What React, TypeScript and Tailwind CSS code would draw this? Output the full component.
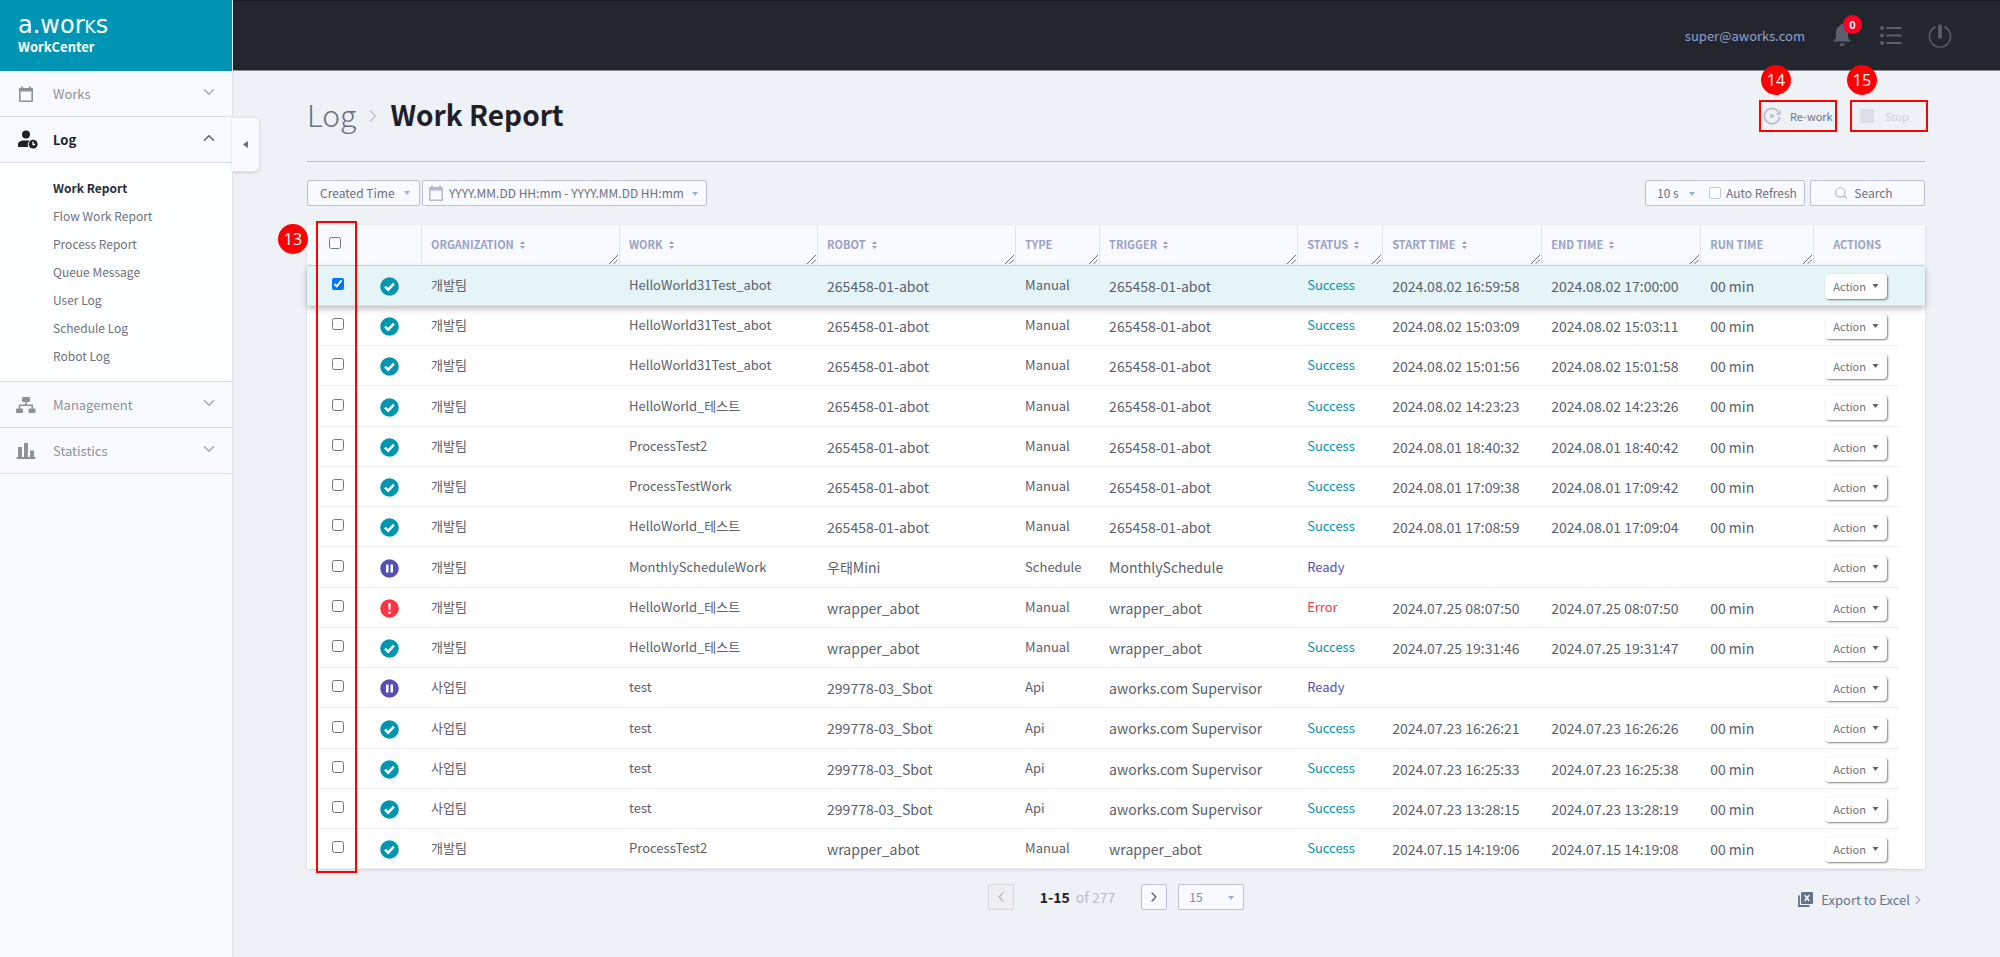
import { useState } from "react";
import type { ReactNode } from "react";
import { ChevronDown, ChevronLeft, ChevronRight, ChevronUp, Search } from "lucide-react";

type Result = "Success" | "Ready" | "Error";

type LogRow = {
  org: string;
  work: string;
  robot: string;
  type: string;
  trigger: string;
  status: Result;
  start: string;
  end: string;
};

const row = (
  org: string,
  work: string,
  robot: string,
  type: string,
  trigger: string,
  status: Result,
  start = "",
  end = ""
): LogRow => ({ org, work, robot, type, trigger, status, start, end });

const ROWS: LogRow[] = [
  row("개발팀", "HelloWorld31Test_abot", "265458-01-abot", "Manual", "265458-01-abot", "Success", "2024.08.02 16:59:58", "2024.08.02 17:00:00"),
  row("개발팀", "HelloWorld31Test_abot", "265458-01-abot", "Manual", "265458-01-abot", "Success", "2024.08.02 15:03:09", "2024.08.02 15:03:11"),
  row("개발팀", "HelloWorld31Test_abot", "265458-01-abot", "Manual", "265458-01-abot", "Success", "2024.08.02 15:01:56", "2024.08.02 15:01:58"),
  row("개발팀", "HelloWorld_테스트", "265458-01-abot", "Manual", "265458-01-abot", "Success", "2024.08.02 14:23:23", "2024.08.02 14:23:26"),
  row("개발팀", "ProcessTest2", "265458-01-abot", "Manual", "265458-01-abot", "Success", "2024.08.01 18:40:32", "2024.08.01 18:40:42"),
  row("개발팀", "ProcessTestWork", "265458-01-abot", "Manual", "265458-01-abot", "Success", "2024.08.01 17:09:38", "2024.08.01 17:09:42"),
  row("개발팀", "HelloWorld_테스트", "265458-01-abot", "Manual", "265458-01-abot", "Success", "2024.08.01 17:08:59", "2024.08.01 17:09:04"),
  row("개발팀", "MonthlyScheduleWork", "우태Mini", "Schedule", "MonthlySchedule", "Ready"),
  row("개발팀", "HelloWorld_테스트", "wrapper_abot", "Manual", "wrapper_abot", "Error", "2024.07.25 08:07:50", "2024.07.25 08:07:50"),
  row("개발팀", "HelloWorld_테스트", "wrapper_abot", "Manual", "wrapper_abot", "Success", "2024.07.25 19:31:46", "2024.07.25 19:31:47"),
  row("사업팀", "test", "299778-03_Sbot", "Api", "aworks.com Supervisor", "Ready"),
  row("사업팀", "test", "299778-03_Sbot", "Api", "aworks.com Supervisor", "Success", "2024.07.23 16:26:21", "2024.07.23 16:26:26"),
  row("사업팀", "test", "299778-03_Sbot", "Api", "aworks.com Supervisor", "Success", "2024.07.23 16:25:33", "2024.07.23 16:25:38"),
  row("사업팀", "test", "299778-03_Sbot", "Api", "aworks.com Supervisor", "Success", "2024.07.23 13:28:15", "2024.07.23 13:28:19"),
  row("개발팀", "ProcessTest2", "wrapper_abot", "Manual", "wrapper_abot", "Success", "2024.07.15 14:19:06", "2024.07.15 14:19:08"),
];

const COLUMNS = [
  { label: "ORGANIZATION", sort: true },
  { label: "WORK", sort: true },
  { label: "ROBOT", sort: true },
  { label: "TYPE", sort: false },
  { label: "TRIGGER", sort: true },
  { label: "STATUS", sort: true },
  { label: "START TIME", sort: true },
  { label: "END TIME", sort: true },
  { label: "RUN TIME", sort: false },
];

const LOG_MENU = ["Work Report", "Flow Work Report", "Process Report", "Queue Message", "User Log", "Schedule Log", "Robot Log"];

const STATUS_COLOR: Record<Result, string> = {
  Success: "text-[#0095b0]",
  Ready: "text-[#5450b5]",
  Error: "text-[#ff3344]",
};

/* ---------- Icons ---------- */

const CalendarIcon = ({ className }: { className: string }) => (
  <svg viewBox="0 0 16 16" className={className} aria-hidden="true">
    <path d="M2 2h12a1 1 0 0 1 1 1v12a1 1 0 0 1-1 1H2a1 1 0 0 1-1-1V3a1 1 0 0 1 1-1z M2.6 5.6v8.8h10.8V5.6z" fill="currentColor" fillRule="evenodd" />
    <path d="M3.2 .4h1.8V3H3.2z M11 .4h1.8V3H11z" fill="currentColor" />
  </svg>
);

const UserClockIcon = () => (
  <svg viewBox="0 0 20 19" className="h-[19px] w-5" aria-hidden="true">
    <circle cx="8" cy="4.4" r="4" fill="currentColor" />
    <path d="M0 17v-2.6C0 11.6 3 10.4 5.5 10.4h6.2A6 6 0 0 0 10.2 17z" fill="currentColor" />
    <circle cx="15.2" cy="14.2" r="4.4" fill="currentColor" />
    <path d="M15 11.6v2.900h2.2" fill="none" stroke="#f8faff" strokeWidth="1.3" />
  </svg>
);

const SitemapIcon = () => (
  <svg viewBox="0 0 20 16" className="h-4 w-5" aria-hidden="true">
    <g fill="currentColor">
      <rect x="6" y="0" width="8" height="5" rx="1" />
      <rect x="0" y="11.5" width="7" height="4.5" rx="1" />
      <rect x="12.5" y="11.5" width="7" height="4.5" rx="1" />
    </g>
    <path d="M10 4v4M3.5 12V8.2h12.7V12" fill="none" stroke="currentColor" strokeWidth="1.6" />
  </svg>
);

const BarsIcon = () => (
  <svg viewBox="0 0 20 16" className="h-4 w-5" aria-hidden="true">
    <path d="M2 4h4v10H2z M8 0h4v14H8z M14 7.5h4V14h-4z M.5 14h19v2H.5z" fill="currentColor" />
  </svg>
);

const BellIcon = () => (
  <svg viewBox="0 0 18 23" className="h-[23px] w-[18px]" aria-hidden="true">
    <path d="M9 0c1 0 1.5.7 1.5 1.7C13.6 2.5 15 5 15 8v6l3 3.500H0L3 14V8c0-3 1.400-5.500 4.500-6.300C7.500.7 8 0 9 0z M6.600 19.500h4.800a2.400 2.700 0 0 1-4.800 0z" fill="currentColor" />
  </svg>
);

const ListIcon = () => (
  <svg viewBox="0 0 22 19" className="h-[19px] w-[22px]" aria-hidden="true">
    <g fill="currentColor">
      <circle cx="2" cy="2" r="1.9" />
      <circle cx="2" cy="9.5" r="1.9" />
      <circle cx="2" cy="17" r="1.9" />
    </g>
    <path d="M7 2h14M7 9.500h14M7 17h14" stroke="currentColor" strokeWidth="1.8" strokeLinecap="round" />
  </svg>
);

const PowerIcon = () => (
  <svg viewBox="0 0 24 24" className="size-6" aria-hidden="true">
    <path d="M7.300 3A10.600 10.600 0 1 0 16.700 3" fill="none" stroke="currentColor" strokeWidth="1.4" strokeLinecap="round" />
    <path d="M12 2v11" stroke="currentColor" strokeWidth="3.6" strokeLinecap="round" />
  </svg>
);

const ReworkIcon = () => (
  <svg viewBox="0 0 18 18" className="size-[18px]" aria-hidden="true">
    <path d="M15 4.200A7.700 7.700 0 1 0 16.700 9.600" fill="none" stroke="currentColor" strokeWidth="1.7" />
    <path d="M17.600 2.600v5.200h-5.200z" fill="currentColor" />
    <path d="M7.400 6.200 11.600 9l-4.200 2.800z" fill="currentColor" />
  </svg>
);

const ExcelIcon = () => (
  <svg viewBox="0 0 15 15" className="size-[15px]" aria-hidden="true">
    <path d="M1 3.500V14h10.500" fill="none" stroke="currentColor" strokeWidth="1.8" />
    <rect x="3" y="0" width="12" height="12" rx="1" fill="currentColor" />
    <path d="m6.800 3.200 4.400 5.600M11.200 3.200 6.800 8.800" stroke="#fff" strokeWidth="1.5" />
  </svg>
);

const Caret = ({ className }: { className: string }) => (
  <svg viewBox="0 0 6 4" className={className} aria-hidden="true">
    <path d="M0 0h6L3 4z" fill="currentColor" />
  </svg>
);

const SortIcon = () => (
  <svg viewBox="0 0 5 8" className="h-2 w-[5px]" aria-hidden="true">
    <path d="M0 3h5L2.500 0z M0 5h5L2.500 8z" fill="currentColor" />
  </svg>
);

const StatusIcon = ({ status }: { status: Result }) => (
  <svg viewBox="0 0 19 19" className={`mx-auto size-[19px] ${STATUS_COLOR[status]}`} aria-label={status}>
    <circle cx="9.5" cy="9.5" r="9.3" fill="currentColor" />
    {status === "Success" && <path d="m5 9.600 3.200 3.100 5.700-6" fill="none" stroke="#fff" strokeWidth="2.5" />}
    {status === "Ready" && <path d="M6 5.500h2.500v8H6z M10.500 5.500H13v8h-2.500z" fill="#fff" />}
    {status === "Error" && <path d="M8.200 4h2.600l-.4 7H8.600z M8.300 12.500h2.400v2.400H8.300z" fill="#fff" />}
  </svg>
);

/* ---------- Pieces ---------- */

const Callout = ({ n, className }: { n: number; className: string }) => (
  <span className={`absolute flex size-[30px] items-center justify-center rounded-full bg-[#ff0000] font-['Open_Sans',sans-serif] text-base text-white ${className}`}>
    {n}
  </span>
);

const MenuItem = ({ icon, label, open = false }: { icon: ReactNode; label: string; open?: boolean }) => (
  <button
    type="button"
    aria-expanded={open}
    className={`flex h-[46px] w-full items-center border-b border-[#dcdfe9] pr-[14px] pl-4 text-left text-[13px] ${open ? "font-bold text-[#1d2029]" : "text-[#8f9197]"}`}
  >
    <span className="flex w-[37px] justify-start">{icon}</span>
    <span className="flex-1">{label}</span>
    {open ? <ChevronUp className="mb-1 size-[18px] text-[#5c6070]" /> : <ChevronDown className="mb-1 size-[18px] text-[#a4a7b8]" />}
  </button>
);

const Sidebar = () => (
  <aside className="relative w-[233px] shrink-0 border-r border-[#dfe2ec] bg-[#f8faff]">
    <div className="flex h-[71px] flex-col bg-[#0095b5] px-[18px] pt-[13px] text-white">
      <span className="font-['DejaVu_Sans',sans-serif] text-2xl leading-6">
        a.wor<span className="[font-variant:small-caps]">k</span>s
      </span>
      <span className="text-[13px] leading-5 font-bold">WorkCenter</span>
    </div>
    <nav>
      <MenuItem label="Works" icon={<CalendarIcon className="ml-[2px] size-4" />} />
      <MenuItem label="Log" open icon={<span className="ml-[2px]"><UserClockIcon /></span>} />
      <ul className="border-b border-[#dcdfe9] bg-[#fdfeff] py-[11px] pl-[53px] text-xs">
        {LOG_MENU.map((item, i) => (
          <li key={item}>
            <a href="#" className={`flex h-7 items-center ${i === 0 ? "font-bold text-[#2a2d37]" : "text-[#6d7180]"}`}>
              {item}
            </a>
          </li>
        ))}
      </ul>
      <MenuItem label="Management" icon={<SitemapIcon />} />
      <MenuItem label="Statistics" icon={<BarsIcon />} />
    </nav>
    <button
      type="button"
      aria-label="Collapse menu"
      className="absolute top-[117px] left-[232px] flex h-[55px] w-7 items-center justify-center rounded-r-md border border-l-0 border-[#dfe2ec] bg-[#f8faff] shadow-sm"
    >
      <Caret className="h-[5px] w-[7px] rotate-90 text-[#5c6070]" />
    </button>
  </aside>
);

const TopBar = () => (
  <header className="flex h-[71px] items-center justify-end border-t border-b border-t-[#171a22] border-b-[#8c8e96] bg-[#23262f] pr-12 text-[#5c5f6d]">
    <span className="mr-7 text-[13px] text-[#8fa3cf]">super@aworks.com</span>
    <button type="button" aria-label="Notifications" className="relative mr-[29px]">
      <BellIcon />
      <span className="absolute -top-[9px] left-[10px] flex size-[19px] items-center justify-center rounded-full bg-[#ff0022] text-[11px] font-bold text-white">0</span>
    </button>
    <button type="button" aria-label="List" className="mr-[26px]">
      <ListIcon />
    </button>
    <button type="button" aria-label="Log out">
      <PowerIcon />
    </button>
  </header>
);

const Heading = () => (
  <div className="flex h-[91px] items-center justify-between border-b border-[#b9bfd0]">
    <h1 className="mb-1 flex items-center text-[28px]">
      <span className="text-3xl font-light text-[#6b7080]">Log</span>
      <ChevronRight className="mx-[7px] mt-1 size-5 text-[#c3c7d4]" strokeWidth={2} />
      <span className="font-bold text-[#1d2029]">Work Report</span>
    </h1>
    <div className="-mr-[3px] flex gap-[13px] text-[11px]">
      <button type="button" className="relative flex h-8 w-[78px] items-center gap-[9px] border-2 border-[#ff0000] pl-[2px] text-[#6d7180]">
        <span className="text-[#b9bcd0]"><ReworkIcon /></span>
        Re-work
        <Callout n={14} className="-top-[37px] left-0" />
      </button>
      <button type="button" className="relative flex h-8 w-[78px] items-center gap-[11px] border-2 border-[#ff0000] pl-2 text-[#cfd3de]">
        <span className="size-[14px] bg-[#dcdfea]" />
        Stop
        <Callout n={15} className="-top-[37px] -left-[5px]" />
      </button>
    </div>
  </div>
);

const Filters = () => {
  const [auto, setAuto] = useState(false);
  return (
    <div className="mt-[18px] flex items-center justify-between text-xs text-[#6d7180]">
      <div className="flex gap-[2px]">
        <div className="relative">
          <select aria-label="Time field" className="h-[26px] w-[113px] appearance-none rounded-xs border border-[#b9c0d8] bg-[#f8faff] pl-3">
            <option>Created Time</option>
          </select>
          <Caret className="pointer-events-none absolute top-[11px] right-[10px] h-1 w-[6px] text-[#9fb0d6]" />
        </div>
        <label className="relative flex h-[26px] w-[285px] items-center rounded-xs border border-[#b9c0d8] bg-[#f8faff] pl-[5px]">
          <CalendarIcon className="size-4 text-[#b4b9d0]" />
          <input aria-label="Period" readOnly value="YYYY.MM.DD HH:mm - YYYY.MM.DD HH:mm" className="ml-[5px] w-[242px] bg-transparent outline-none" />
          <Caret className="absolute top-[11px] right-2 h-1 w-[6px] text-[#9fb0d6]" />
        </label>
      </div>
      <div className="flex gap-[5px]">
        <div className="flex h-[26px] w-[160px] items-center rounded-xs border border-[#b9c0d8] bg-[#f8faff]">
          <div className="relative">
            <select aria-label="Refresh interval" className="w-[63px] appearance-none bg-transparent pl-[11px]">
              <option>10 s</option>
            </select>
            <Caret className="pointer-events-none absolute top-[7px] right-[14px] h-1 w-[6px] text-[#9fb0d6]" />
          </div>
          <label className="flex items-center gap-[5px]">
            <input
              type="checkbox"
              checked={auto}
              onChange={() => setAuto(!auto)}
              className="size-3 appearance-none rounded-xs border border-[#c3c7d4] bg-white checked:bg-[#0095b5]"
            />
            Auto Refresh
          </label>
        </div>
        <button type="button" className="flex h-[26px] w-[115px] items-center justify-center gap-[6px] rounded-xs border border-[#b9c0d8] bg-[#f8faff] pr-2">
          <Search className="size-[14px] text-[#b4b9c8]" />
          Search
        </button>
      </div>
    </div>
  );
};

const LogTable = () => {
  const [selected, setSelected] = useState<number[]>([0]);
  const toggle = (i: number) => setSelected(selected.includes(i) ? selected.filter((s) => s !== i) : [...selected, i]);

  return (
    <div className="relative mt-[19px] shadow-sm">
      <table className="w-full table-fixed border-separate border-spacing-0 bg-white text-sm text-[#5a5f6b]">
        {/* narrow first and last columns keep the row lines off the table edge */}
        <colgroup>
          <col className="w-[13px]" />
          <col className="w-[38px]" />
          <col className="w-[63px]" />
          <col className="w-[12.24%]" />
          <col className="w-[12.24%]" />
          <col className="w-[12.24%]" />
          <col className="w-[84px]" />
          <col className="w-[12.24%]" />
          <col className="w-[85px]" />
          <col className="w-[159px]" />
          <col className="w-[159px]" />
          <col className="w-[113px]" />
          <col />
          <col className="w-[26px]" />
        </colgroup>
        <thead>
          <tr className="h-[41px] bg-[#f8faff] text-left text-[11px] text-[#98a2c8]">
            <th colSpan={3} className="border-b border-[#cfd4de] pl-[22px] align-middle">
              <input
                type="checkbox"
                aria-label="Select all"
                checked={selected.length === ROWS.length}
                onChange={() => setSelected(selected.length === ROWS.length ? [] : ROWS.map((_, i) => i))}
                className="mb-1 block size-3"
              />
            </th>
            {COLUMNS.map((c) => (
              <th key={c.label} className="relative border-b border-l border-b-[#cfd4de] border-l-[#e2e5ee] pl-[9px] font-bold whitespace-nowrap">
                <span className="flex items-center gap-[6px]">
                  {c.label}
                  {c.sort && <SortIcon />}
                </span>
                <svg viewBox="0 0 9 9" className="absolute right-px bottom-px size-[9px]" aria-hidden="true">
                  <path d="M0 9 9 0M4.500 9 9 4.500" stroke="#6b6e75" strokeWidth="1" />
                </svg>
              </th>
            ))}
            <th colSpan={2} className="border-b border-l border-b-[#cfd4de] border-l-[#e2e5ee] pl-[19px] font-bold">
              ACTIONS
            </th>
          </tr>
        </thead>
        <tbody>
          {ROWS.map((r, i) => {
            const on = selected.includes(i);
            const line = on ? "border-b border-[#d3e0e4]" : "border-b border-[#eceef4]";
            const cell = `${line} pl-[10px] whitespace-nowrap`;
            return (
              <tr key={i} className={`h-10 nth-[4n]:h-[41px] ${on ? "relative bg-[#e4f4f7] shadow-[0_3px_6px_rgba(0,0,0,0.25)]" : ""}`}>
                <td className={on ? line : ""} />
                <td className={`${line} pl-3`}>
                  <input
                    type="checkbox"
                    aria-label={`Select row ${i + 1}`}
                    checked={on}
                    onChange={() => toggle(i)}
                    className="mb-[3px] block size-3 accent-[#0075ff]"
                  />
                </td>
                <td className={`${line} pt-[2px]`}>
                  <StatusIcon status={r.status} />
                </td>
                <td className={`${cell} text-[13px]`}>{r.org}</td>
                <td className={`${cell} text-[13px]`}>{r.work}</td>
                <td className={cell}>{r.robot}</td>
                <td className={`${cell} text-[13px]`}>{r.type}</td>
                <td className={cell}>{r.trigger}</td>
                <td className={`${cell} text-[13px] ${STATUS_COLOR[r.status]}`}>{r.status}</td>
                <td className={cell}>{r.start}</td>
                <td className={cell}>{r.end}</td>
                <td className={cell}>{r.start && "00 min"}</td>
                <td className={`${line} pl-3`}>
                  <button type="button" className="mt-[2px] flex h-[25px] w-[62px] items-center justify-center gap-[6px] rounded-sm bg-white text-[11px] text-[#6d7180] shadow-[1px_1px_2px_rgba(0,0,0,0.5)]">
                    Action
                    <Caret className="mb-[2px] h-1 w-[7px] text-[#5c6070]" />
                  </button>
                </td>
                <td className={on ? line : ""} />
              </tr>
            );
          })}
        </tbody>
      </table>
      <div className="pointer-events-none absolute -top-1 -bottom-1 left-[9px] w-[41px] border-2 border-[#ff0000]" />
      <Callout n={13} className="-top-px -left-[29px]" />
    </div>
  );
};

const Footer = () => (
  <div className="relative mt-[15px] flex items-center justify-center">
    <button type="button" aria-label="Previous page" disabled className="flex size-[26px] items-center justify-center rounded-xs border border-[#d5d8e0] bg-[#efeff1]">
      <ChevronLeft className="size-4 text-[#b9bcc6]" />
    </button>
    <p className="mx-[26px] text-sm text-[#b9bfd0]">
      <span className="mr-[6px] font-bold text-[#1d2029]">1-15</span>
      of 277
    </p>
    <button type="button" aria-label="Next page" className="flex size-[26px] items-center justify-center rounded-xs border border-[#b9c0d8] bg-[#f8faff]">
      <ChevronRight className="size-4 text-[#5c6070]" />
    </button>
    <div className="relative ml-[11px]">
      <select aria-label="Rows per page" className="block h-[26px] w-[66px] appearance-none rounded-xs border border-[#b9c0d8] bg-[#f8faff] pl-[10px] text-xs text-[#8088a0]">
        <option>15</option>
      </select>
      <Caret className="pointer-events-none absolute top-[12px] right-[10px] h-1 w-[6px] text-[#9fb0d6]" />
    </div>
    <a href="#" className="absolute top-[6px] right-0 flex items-center text-[13px] text-[#64748b]">
      <ExcelIcon />
      <span className="ml-2">Export to Excel</span>
      <ChevronRight className="ml-px size-[14px] text-[#a4a9ba]" />
    </a>
  </div>
);

export default function App() {
  return (
    <div className="flex min-h-screen bg-[#eef1f6] font-['Noto_Sans_CJK_KR',sans-serif]">
      <Sidebar />
      <div className="min-w-0 flex-1">
        <TopBar />
        <main className="pr-[75px] pl-[74px]">
          <Heading />
          <Filters />
          <LogTable />
          <Footer />
        </main>
      </div>
    </div>
  );
}
